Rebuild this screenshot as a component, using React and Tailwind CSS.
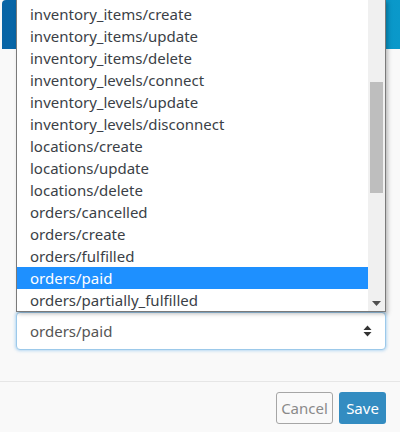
import React from "react";

const EVENTS = [
  "inventory_items/create",
  "inventory_items/update",
  "inventory_items/delete",
  "inventory_levels/connect",
  "inventory_levels/update",
  "inventory_levels/disconnect",
  "locations/create",
  "locations/update",
  "locations/delete",
  "orders/cancelled",
  "orders/create",
  "orders/fulfilled",
  "orders/paid",
  "orders/partially_fulfilled",
];

const SELECTED = "orders/paid";

export default function App() {
  return (
    <div
      className="relative w-[400px] h-[432px] overflow-hidden bg-[#f9f9f9]"
      style={{ fontFamily: '"Noto Sans", "Open Sans", sans-serif' }}
    >
      {/* modal header */}
      <div className="h-[49px] ml-[2px] rounded-tl-[4px] bg-gradient-to-r from-[#0864a5] to-[#0a99ca]" />

      {/* body */}
      <div className="pl-[16px] pr-[14px] pt-[263px] pb-[31px]">
        <div className="h-[38px] flex items-center justify-between pl-[13px] pr-[13px] bg-white border border-[#9cc9ea] rounded-[4px] shadow-[0_0_3px_1px_rgba(102,175,233,0.45)]">
          <span className="text-[15px] text-[#555]">{SELECTED}</span>
          <svg width="9" height="12" viewBox="0 0 9 12">
            <path d="M4.5 0.5 L8.5 5 L0.5 5 Z" fill="#333" />
            <path d="M4.5 11.5 L8.5 7 L0.5 7 Z" fill="#333" />
          </svg>
        </div>
      </div>

      {/* footer */}
      <div className="border-t border-[#e6e6e6] flex justify-end gap-[6px] pt-[10px] pr-[14px]">
        <button className="w-[57px] h-[32px] border border-[#a6a6a6] rounded-[3px] text-[15px] text-[#8a8a8a] bg-transparent">
          Cancel
        </button>
        <button className="w-[47px] h-[32px] rounded-[3px] text-[15px] text-white bg-[#338cc1]">
          Save
        </button>
      </div>

      {/* open dropdown list */}
      <div className="absolute left-[16px] top-0 w-[370px] h-[312px] flex bg-white border-x border-b border-[#7a7a7a] shadow-[2px_2px_4px_rgba(0,0,0,0.25)]">
        <ul className="flex-1 pt-[3px]">
          {EVENTS.map((ev) => (
            <li
              key={ev}
              className={
                ev === SELECTED
                  ? "h-[22px] leading-[22px] pl-[13px] text-[15px] bg-[#1e90ff] text-white"
                  : "h-[22px] leading-[22px] pl-[13px] text-[15px] text-[#3b3f47]"
              }
            >
              {ev}
            </li>
          ))}
        </ul>
        <div className="w-[17px] bg-[#f0f0f0] flex flex-col items-center">
          <div className="mt-[82px] w-[13px] h-[111px] bg-[#bebebe]" />
          <div className="flex-1" />
          <svg width="9" height="5" viewBox="0 0 9 5" className="mb-[5px]">
            <path d="M0 0 L9 0 L4.5 5 Z" fill="#505050" />
          </svg>
        </div>
      </div>
    </div>
  );
}
